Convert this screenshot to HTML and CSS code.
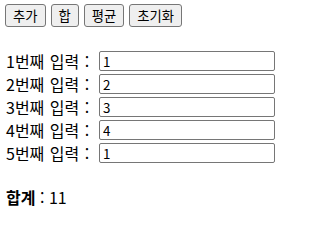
FILE: index.html
```html
<!DOCTYPE html>
<html lang="ko">
<head>
<meta charset="utf-8">
<link rel="stylesheet" href="styles.css">
</head>
<body>
<div class="toolbar">
  <button class="btn">추가</button>
  <button class="btn">합</button>
  <button class="btn">평균</button>
  <button class="btn">초기화</button>
</div>
<div class="rows">
  <div class="row"><span class="label">1번째 입력 : </span><input class="field" type="text" value="1"></div>
  <div class="row"><span class="label">2번째 입력 : </span><input class="field" type="text" value="2"></div>
  <div class="row"><span class="label">3번째 입력 : </span><input class="field" type="text" value="3"></div>
  <div class="row"><span class="label">4번째 입력 : </span><input class="field" type="text" value="4"></div>
  <div class="row"><span class="label">5번째 입력 : </span><input class="field" type="text" value="1"></div>
</div>
<div class="total"><b class="total-label">합계</b> : 11</div>
</body>
</html>
```
FILE: styles.css
```css
html, body { background: #fff; }
body {
  margin: 4px 5px;
  font-family: "Noto Sans CJK KR", "Noto Sans", sans-serif;
  font-size: 16px;
  color: #000;
}
.toolbar {
  display: flex;
  gap: 5px;
  height: 23px;
}
.btn {
  font-family: "Noto Sans CJK KR", "Noto Sans", sans-serif;
  font-size: 13.33px;
  line-height: 17px;
  padding: 2px 7px;
  height: 23px;
  background: #efefef;
  border: 1px solid #767676;
  border-radius: 3px;
  color: #000;
  margin: 0;
}
.rows {
  margin-top: 24px;
  display: flex;
  flex-direction: column;
  gap: 3px;
}
.row {
  display: flex;
  align-items: center;
  height: 20px;
}
.label {
  width: 93px;
  padding-left: 1px;
  white-space: pre;
  line-height: 20px;
  word-spacing: 1px;
}
.field {
  box-sizing: border-box;
  width: 176px;
  height: 20px;
  margin: 0;
  padding: 1px 3px;
  border: 1px solid #767676;
  border-radius: 2px;
  font-family: "Noto Sans CJK KR", "Noto Sans", sans-serif;
  font-size: 13.33px;
  color: #000;
}
.total {
  margin-top: 24px;
  padding-left: 1px;
  line-height: 20px;
}
.total-label { font-weight: bold; }
```
